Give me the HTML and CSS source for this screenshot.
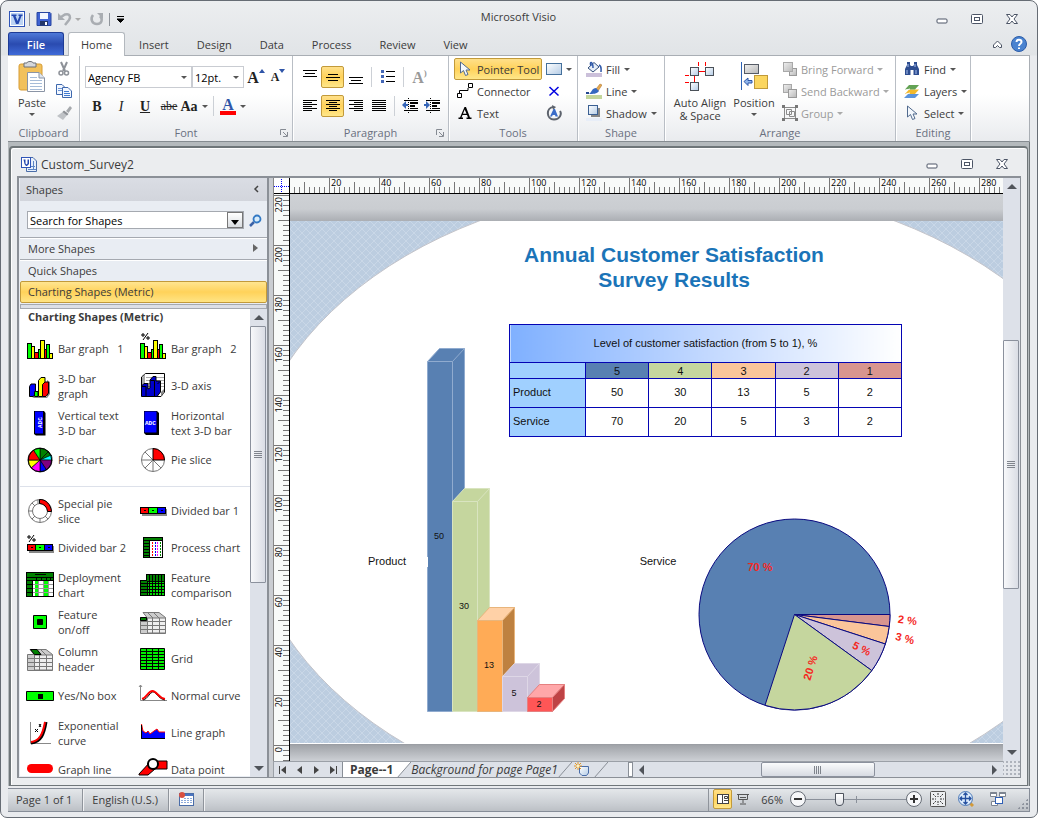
FILE: index.html
```html
<!DOCTYPE html>
<html lang="en">
<head>
<meta charset="utf-8">
<title>Microsoft Visio</title>
<link rel="stylesheet" href="styles.css">
</head>
<body>
<svg class="sprite" aria-hidden="true">
  <defs>
    <linearGradient id="gBox" x1="0" y1="0" x2="1" y2="1"><stop offset="0" stop-color="#fff"/><stop offset="1" stop-color="#b4cce6"/></linearGradient>
    <linearGradient id="gGrey" x1="0" y1="0" x2="1" y2="1"><stop offset="0" stop-color="#f0f0f0"/><stop offset="1" stop-color="#b8b8b8"/></linearGradient>
    <pattern id="hatch" width="8" height="8" patternUnits="userSpaceOnUse"><rect width="8" height="8" fill="#bccde0"/><path d="M0 0L8 8M8 0L0 8" stroke="#c9d7e7" stroke-width="1" fill="none"/></pattern>
    <pattern id="ticksX" x="39" width="50" height="15" patternUnits="userSpaceOnUse"><path d="M.5 0V15M25.5 4V15M5.5 9V15M10.5 9V15M15.5 9V15M20.5 9V15M30.5 9V15M35.5 9V15M40.5 9V15M45.5 9V15" stroke="#777" fill="none"/></pattern>
    <pattern id="ticksY" y="1" width="15" height="50" patternUnits="userSpaceOnUse"><path d="M0 .5H15M4 25.5H15M9 5.5H15M9 10.5H15M9 15.5H15M9 20.5H15M9 30.5H15M9 35.5H15M9 40.5H15M9 45.5H15" stroke="#777" fill="none"/></pattern>
  </defs>
  <symbol id="min" viewBox="0 0 12 10"><rect x="1" y="5" width="10" height="4" rx="1" fill="#fff" stroke="#4c5566"/></symbol>
  <symbol id="max" viewBox="0 0 12 10"><rect x=".5" y=".5" width="11" height="9" rx="1" fill="#fff" stroke="#4c5566"/><rect x="3.5" y="3.5" width="5" height="3" fill="#fff" stroke="#4c5566"/></symbol>
  <symbol id="close" viewBox="0 0 12 10"><path d="M.5 .5H4L6 3L8 .5H11.500L8 5L11.500 9.500H8L6 7L4 9.500H.5L4 5Z" fill="#fff" stroke="#4c5566"/></symbol>
  <symbol id="pointer" viewBox="0 0 12 16"><path d="M1.500 1V12L4.500 9.500L6.500 14.500L9 13.500L7 9H11Z" fill="#f4f8fd" stroke="#516a8e"/></symbol>
  <symbol id="pct" viewBox="0 0 9 7"><path d="M1 1h2v2H1zM6 4h2v2H6zM7 0L2 7" fill="none" stroke="#000"/></symbol>
  <symbol id="bars" viewBox="0 0 26 19"><g stroke="#000" shape-rendering="crispEdges"><path d="M.5 3.500h4v15h-4z" fill="#0f0"/><path d="M4.500 6.500h3v12h-3z" fill="#ff0"/><path d="M7.500 12.500h4v6h-4z" fill="#f00"/><path d="M11.500 9.500h2v9h-2z" fill="#0f0"/><path d="M13.500 .5h4v18h-4z" fill="#ff0"/><path d="M17.500 9.500h2v9h-2z" fill="#f00"/><path d="M19.500 4.500h3v14h-3z" fill="#0f0"/><path d="M22.500 13.500h3v5h-3z" fill="#ff0"/></g></symbol>
  <symbol id="dbar" viewBox="0 0 27 9"><path d="M2 2h25v7H2z" fill="#888"/><g stroke="#000" shape-rendering="crispEdges"><path d="M.5 .5h8v6h-8z" fill="#f00"/><path d="M8.500 .5h9v6h-9z" fill="#0f0"/><path d="M17.500 .5h8v6h-8z" fill="#00f"/><path d="M4 3.500h2M12 3.500h2M21 3.500h2"/></g></symbol>
</svg>

<div class="window">
  <header class="titlebar">
    <div class="qat">
      <svg class="i16" viewBox="0 0 16 16" role="img" aria-label="Visio"><rect x=".5" y=".5" width="15" height="15" fill="#fff" stroke="#2f55b8"/><path d="M2 2H14V14H2Z" fill="#bcd3f3"/><path d="M2.500 3.500H7.500V5H6.500L8.500 10L10.500 5H9.500V3.500H13.500V5H12.500L9.500 13H7L4 5H2.500Z" fill="#2448b0"/></svg>
      <span class="sep"></span>
      <button aria-label="Save"><svg class="i16" viewBox="0 0 16 16"><path d="M1 1.500H14L15 2.500V14.500H1Z" fill="#3f63d3" stroke="#2745a0"/><path d="M4 2H12V8H4Z" fill="#f3f7ff"/><path d="M4 10H12V14.500H4Z" fill="#233668"/><path d="M9 11h2v3H9z" fill="#fff"/></svg></button>
      <button aria-label="Undo" class="undo" disabled><svg class="i16" viewBox="0 0 16 16"><path d="M4 6L8 3.500C13 2 14 6 12 9L8 14" fill="none" stroke="#a9adb2" stroke-width="2.500"/><path d="M1 2V9H8Z" fill="#a9adb2"/></svg><span class="caret pale"></span></button>
      <button aria-label="Redo" disabled><svg class="i16" viewBox="0 0 16 16"><path d="M4 4C1 8 3 13 8 13C13 13 14 8 11 5" fill="none" stroke="#a9adb2" stroke-width="2.500"/><path d="M8 2H14V8Z" fill="#a9adb2"/></svg></button>
      <span class="sep"></span>
      <button aria-label="Customize toolbar"><svg class="i8" viewBox="0 0 8 8"><path d="M1 1.500H8M1 4H8L4.500 7.500Z" stroke="#000" stroke-width="1"/></svg></button>
    </div>
    <h1>Microsoft Visio</h1>
    <div class="winbtns">
      <button aria-label="Minimize"><svg><use href="#min"/></svg></button><button aria-label="Restore"><svg><use href="#max"/></svg></button><button aria-label="Close"><svg><use href="#close"/></svg></button>
    </div>
  </header>

  <nav class="tabs">
    <button class="file">File</button><button class="on">Home</button><button>Insert</button><button>Design</button><button>Data</button><button>Process</button><button>Review</button><button>View</button>
    <span class="grow"></span>
    <button class="ic" aria-label="Minimize ribbon"><svg width="11" height="9" viewBox="0 0 11 9"><path d="M1.500 5L5.500 1L9.500 5V7.500H7.500L5.500 5.500L3.500 7.500H1.500Z" fill="#fff" stroke="#4c5566"/></svg></button>
    <button class="ic" aria-label="Help"><svg class="i16" viewBox="0 0 16 16"><circle cx="8" cy="8" r="7.500" fill="#4a83d0" stroke="#2c5ca8"/><path d="M5.500 6C5.500 3 10.500 3 10.500 6C10.500 8 8 7.500 8 10M8 11.500V13" fill="none" stroke="#fff" stroke-width="2"/></svg></button>
  </nav>

  <section class="ribbon">
    <div class="group g-clip">
      <div class="body">
        <button class="big"><svg width="28" height="32" viewBox="0 0 28 32"><rect x="1" y="3" width="23" height="26" rx="2" fill="#f2c15c" stroke="#d79c35"/><path d="M6 2H9C9 0 15 0 15 2H18V6H6Z" fill="#d6d8dc" stroke="#6d7178"/><path d="M9.500 11.500H21L26.500 17V30.500H9.500Z" fill="#fff" stroke="#8a94a5"/><path d="M21 11.500V17H26.500" fill="#dde6f2" stroke="#8a94a5"/><path d="M12 16.500h7M12 19.500h12M12 22.500h12M12 25.500h12M12 28.500h12" stroke="#a6bcd8"/></svg><span>Paste</span><i class="caret"></i></button>
        <div class="stack">
          <button aria-label="Cut" disabled><svg class="i16" viewBox="0 0 16 16"><path d="M5 1L9 10M11 1L7 10" stroke="#8d9198" stroke-width="2"/><circle cx="5" cy="12" r="2" fill="none" stroke="#8d9198" stroke-width="1.500"/><circle cx="10.500" cy="12" r="2" fill="none" stroke="#8d9198" stroke-width="1.500"/></svg></button>
          <button aria-label="Copy"><svg class="i16" viewBox="0 0 16 16"><path d="M.5 1.500H6L9.500 5V11.500H.5Z" fill="#f2f7ff" stroke="#3e68ad"/><path d="M2 5.500h5M2 7.500h5" stroke="#6d96d6"/><path d="M6.500 4.500H12L15.500 8V14.500H6.500Z" fill="#f2f7ff" stroke="#3e68ad"/><path d="M8 8.500h5M8 10.500h6M8 12.500h6" stroke="#3f7ad0"/></svg></button>
          <button aria-label="Format Painter" disabled><svg class="i16" viewBox="0 0 16 16"><path d="M1 11L8 6L12 9L7 15Z" fill="#bfc2c6"/><path d="M8 5.500L12.500 9L11 10.500L6.500 7Z" fill="#8f9297"/><path d="M10 6L14 1L16 3L12.500 8Z" fill="#a6a9ad"/></svg></button>
        </div>
      </div>
      <h2>Clipboard</h2>
    </div>

    <div class="group g-font">
      <div class="body rows">
        <div class="row">
          <span class="combo c-name"><select aria-label="Font"><option>Agency FB</option></select><i class="caret"></i></span><span class="combo c-size"><select aria-label="Font size"><option>12pt.</option></select><i class="caret"></i></span>
          <button class="t24 serif big1" aria-label="Grow font">A<svg width="6" height="4" viewBox="0 0 6 4"><path d="M0 4L3 0L6 4Z" fill="#2f55a8"/></svg></button>
          <button class="t24 serif big2" aria-label="Shrink font">A<svg width="6" height="4" viewBox="0 0 6 4"><path d="M0 0L3 4L6 0Z" fill="#2f55a8"/></svg></button>
        </div>
        <div class="row">
          <button class="t24 serif"><b>B</b></button><button class="t24 serif"><em>I</em></button><button class="t24 serif"><u>U</u></button><button class="t24 serif"><s>abe</s></button><button class="t24 serif wide">Aa<i class="caret"></i></button>
          <span class="vsep"></span>
          <button class="t24 serif wide fcolor" aria-label="Font colour"><span>A</span><i class="caret"></i></button>
        </div>
      </div>
      <h2>Font<svg class="launch" viewBox="0 0 8 8"><path d="M.5 6V.5H6M3 3L7 7M7.500 3V7.500H3" fill="none" stroke="#868b93"/></svg></h2>
    </div>

    <div class="group g-para">
      <div class="body rows">
        <div class="row">
          <button class="p24" aria-label="Align top"><svg class="i16" viewBox="0 0 16 16"><path d="M1 1.500h14M3 4.500h10M1 7.500h14" stroke="#000"/></svg></button>
          <button class="p24 on" aria-label="Align middle"><svg class="i16" viewBox="0 0 16 16"><path d="M3 5.500h10M1 8.500h14M3 11.500h10" stroke="#000"/></svg></button>
          <button class="p24" aria-label="Align bottom"><svg class="i16" viewBox="0 0 16 16"><path d="M1 8.500h14M3 11.500h10M1 14.500h14" stroke="#000"/></svg></button>
          <span class="vsep"></span>
          <button class="p24" aria-label="Bullets"><svg class="i16" viewBox="0 0 16 16"><path d="M6 2.500h9M6 7.500h9M6 12.500h9" stroke="#000"/><path d="M1 1h3v3H1zM1 6h3v3H1zM1 11h3v3H1z" fill="#4468b8"/></svg></button>
          <span class="vsep"></span>
          <button class="p24 serif pale1" aria-label="Rotate text" disabled>A<sup>)</sup></button>
        </div>
        <div class="row">
          <button class="p24" aria-label="Align left"><svg class="i16" viewBox="0 0 16 16"><path d="M1 2.500h14M1 4.500h9M1 6.500h14M1 8.500h9M1 10.500h14M1 12.500h9" stroke="#000"/></svg></button>
          <button class="p24 on" aria-label="Centre"><svg class="i16" viewBox="0 0 16 16"><path d="M1 2.500h14M4 4.500h8M1 6.500h14M4 8.500h8M1 10.500h14M4 12.500h8" stroke="#000"/></svg></button>
          <button class="p24" aria-label="Align right"><svg class="i16" viewBox="0 0 16 16"><path d="M1 2.500h14M6 4.500h9M1 6.500h14M6 8.500h9M1 10.500h14M6 12.500h9" stroke="#000"/></svg></button>
          <button class="p24" aria-label="Justify"><svg class="i16" viewBox="0 0 16 16"><path d="M1 2.500h14M1 4.500h14M1 6.500h14M1 8.500h14M1 10.500h14M1 12.500h14" stroke="#000"/></svg></button>
          <span class="vsep"></span>
          <button class="p22" aria-label="Decrease indent"><svg class="i16" viewBox="0 0 16 16"><path d="M2 2.500h14M8 10.500h8M2 12.500h14" stroke="#000"/><path d="M8 5h8M8 8h5" stroke="#000" stroke-width="2"/><path d="M6.500 0V15" stroke="#000" stroke-dasharray="1 1"/><path d="M0 7L4 3V6H6V8H4V11Z" fill="#3565b8"/></svg></button>
          <button class="p22" aria-label="Increase indent"><svg class="i16" viewBox="0 0 16 16"><path d="M2 2.500h14M8 10.500h8M2 12.500h14" stroke="#000"/><path d="M8 5h8M8 8h5" stroke="#000" stroke-width="2"/><path d="M6.500 0V15" stroke="#000" stroke-dasharray="1 1"/><path d="M6 7L2 3V6H0V8H2V11Z" fill="#3565b8"/></svg></button>
        </div>
      </div>
      <h2>Paragraph<svg class="launch" viewBox="0 0 8 8"><path d="M.5 6V.5H6M3 3L7 7M7.500 3V7.500H3" fill="none" stroke="#868b93"/></svg></h2>
    </div>

    <div class="group g-tools">
      <div class="body">
        <div class="stack">
          <button class="cmd on"><svg class="i16"><use href="#pointer"/></svg>Pointer Tool</button>
          <button class="cmd"><svg class="i16" viewBox="0 0 16 16"><path d="M2.500 10V7.500H11V5" fill="none" stroke="#000"/><path d="M.5 10.500h4v4h-4zM11.500 .5h4v4h-4z" fill="#fff" stroke="#000"/></svg>Connector</button>
          <button class="cmd"><svg class="i16" viewBox="0 0 16 16"><path d="M7.500 2H9L13 12.500H14.500V14H9.500V12.500H11L10 10H5.500L4.500 12.500H6V14H1.500V12.500H3ZM7.700 4.500L6 8.700H9.500Z" fill="#000"/></svg>Text</button>
        </div>
        <div class="stack">
          <button class="cmd" aria-label="Rectangle"><svg class="i16" viewBox="0 0 16 16"><rect x=".5" y="2.500" width="15" height="11" fill="url(#gBox)" stroke="#44709c"/></svg><i class="caret"></i></button>
          <button class="cmd" aria-label="Connection point"><svg class="i16" viewBox="0 0 16 16"><path d="M3.500 4L12.500 12.500M12.500 4L3.500 12.500" stroke="#0000e0" stroke-width="1.500"/></svg></button>
          <button class="cmd" aria-label="Text block"><svg class="i16" viewBox="0 0 16 16"><path d="M7 2C0 3 0 14 8 14.500C14 14.500 16 9 14 6" fill="none" stroke="#5d636d" stroke-width="2"/><path d="M6 0L10 2L7 5Z" fill="#5d636d"/><path d="M7.500 4H9L12 11.500H9.500L9 10H6.700L6 11.500H4Z" fill="#3a6cc8"/></svg></button>
        </div>
      </div>
      <h2>Tools</h2>
    </div>

    <div class="group g-shape">
      <div class="body"><div class="stack">
        <button class="cmd"><svg class="i16" viewBox="0 0 16 16"><path d="M0 12h16v4H0z" fill="#cbc0da"/><path d="M2 7L8 1.500L13 6L7 11Z" fill="#e6eef8" stroke="#35507c"/><path d="M7 7C7 0 3 0 5 5M13 4C16 5 15 8 15 11" fill="none" stroke="#2d57a8" stroke-width="1.500"/></svg>Fill<i class="caret"></i></button>
        <button class="cmd"><svg class="i16" viewBox="0 0 16 16"><path d="M0 12h16v4H0z" fill="#c3d59b"/><path d="M10 6L14 1L16 2L12 8Z" fill="#e9a94e" stroke="#9c6b26" stroke-width=".5"/><path d="M3 11C6 9 6 5 10 5L13 8C11 11 7 11 3 11Z" fill="#3568c0"/><path d="M0 9h3v2H0z" fill="#23468f"/></svg>Line<i class="caret"></i></button>
        <button class="cmd"><svg class="i16" viewBox="0 0 16 16"><path d="M0 13h16v3H0z" fill="#e8eef8"/><path d="M5 3H14V12H5Z" fill="#868686"/><rect x="2.500" y=".5" width="9" height="9" fill="url(#gBox)" stroke="#3a5f92"/></svg>Shadow<i class="caret"></i></button>
      </div></div>
      <h2>Shape</h2>
    </div>

    <div class="group g-arr">
      <div class="body">
        <button class="big b-auto"><svg width="32" height="32" viewBox="0 0 32 32"><path d="M14.500 1V5M21.500 1V5M15 10.500H21M1 14.500H5M1 21.500H5M10.500 15V21" stroke="#f00" fill="none"/><g fill="url(#gBox)" stroke="#4a5058"><rect x="6.500" y="6.500" width="8" height="8"/><rect x="21.500" y="6.500" width="8" height="8"/><rect x="6.500" y="21.500" width="8" height="8"/></g></svg><span>Auto Align<br>&amp; Space</span></button>
        <button class="big b-pos"><svg width="32" height="32" viewBox="0 0 32 32"><path d="M3.500 1V29" stroke="#2d62b5"/><rect x="6.500" y="3.500" width="14" height="9" fill="url(#gGrey)" stroke="#555b66"/><rect x="16.500" y="14.500" width="13" height="13" fill="#fbd65f" stroke="#c09a3a"/><path d="M6 20.500L10 17V19.500H14V22H10V24.500Z" fill="#8fb4ea" stroke="#2d57a8"/></svg><span>Position</span><i class="caret"></i></button>
        <div class="stack">
          <button class="cmd" disabled><svg class="i16" viewBox="0 0 16 16"><rect x="7.500" y="7.500" width="7" height="7" fill="url(#gGrey)" stroke="#999"/><rect x="1.500" y="1.500" width="9" height="9" fill="url(#gGrey)" stroke="#a9a9a9"/></svg>Bring Forward<i class="caret"></i></button>
          <button class="cmd" disabled><svg class="i16" viewBox="0 0 16 16"><rect x="1.500" y="1.500" width="8" height="8" fill="url(#gGrey)" stroke="#a9a9a9"/><rect x="6.500" y="6.500" width="8" height="8" fill="url(#gGrey)" stroke="#999"/></svg>Send Backward<i class="caret"></i></button>
          <button class="cmd" disabled><svg class="i16" viewBox="0 0 16 16"><path d="M2.500 2.500h11v11h-11zM4.500 4.500h5v5h-5zM7.500 6.500h5v5h-5z" fill="none" stroke="#8b8b8b"/><path d="M0 0h3v3H0zM13 0h3v3h-3zM0 13h3v3H0zM13 13h3v3h-3z" fill="#777"/></svg>Group<i class="caret"></i></button>
        </div>
      </div>
      <h2>Arrange</h2>
    </div>

    <div class="group g-edit">
      <div class="body"><div class="stack">
        <button class="cmd"><svg class="i16" viewBox="0 0 16 16"><path d="M3 1h3v3l1 1h2l1-1V1h3v3l2 4v6H9.500V9h-3v5H1V8l2-4Z" fill="#2e4d90"/><path d="M3 9v4M12 9v4M4 3v3M11 3v3" stroke="#a9c1ee"/></svg>Find<i class="caret"></i></button>
        <button class="cmd"><svg class="i16" viewBox="0 0 16 16"><path d="M4 11H15L11 15H0Z" fill="#5b94dc"/><path d="M5 6.500H15L11 11H1Z" fill="#f2b92c"/><path d="M5 2H15L11 6.500H1Z" fill="#63a254"/><path d="M2 7l4-1M2 11l4-1" stroke="#fff"/></svg>Layers<i class="caret"></i></button>
        <button class="cmd"><svg class="i16"><use href="#pointer"/></svg>Select<i class="caret"></i></button>
      </div></div>
      <h2>Editing</h2>
    </div>
  </section>

  <main class="workspace">
    <div class="doc">
      <header class="doctitle">
        <svg class="i16" viewBox="0 0 16 16"><path d="M5.500 1.500H12L15.500 5V15.500H5.500Z" fill="#e6effb" stroke="#4a6da8"/><path d="M12.500 5v9M7 13.500h8M10 10.500h4" stroke="#5c86c6"/><rect x=".5" y="1.500" width="9" height="10" fill="#fff" stroke="#2f55b8"/><path d="M2.500 3.500h2v4l1 1 1-1v-4h1.500v4.500l-2 2h-1l-1.500-2Z" fill="#2448b0"/></svg>
        <h2>Custom_Survey2</h2>
        <div class="winbtns"><button aria-label="Minimize document"><svg><use href="#min"/></svg></button><button aria-label="Restore document"><svg><use href="#max"/></svg></button><button aria-label="Close document"><svg><use href="#close"/></svg></button></div>
      </header>

      <div class="panes">
        <aside class="side">
          <header><h3>Shapes</h3><button aria-label="Collapse"><svg width="6" height="8" viewBox="0 0 6 8"><path d="M5 1L2 4L5 7" fill="none" stroke="#444" stroke-width="1.500"/></svg></button></header>
          <div class="search">
            <div class="field"><input aria-label="Search for Shapes" value="Search for Shapes"><button aria-label="Search options"><svg width="8" height="5" viewBox="0 0 8 5"><path d="M0 0H8L4 5Z"/></svg></button></div>
            <button aria-label="Search"><svg width="13" height="13" viewBox="0 0 13 13"><path d="M1 12L5 8" stroke="#3b62a8" stroke-width="2.500"/><circle cx="8" cy="5" r="3.500" fill="#d8ecfb" stroke="#3379c4" stroke-width="1.800"/></svg></button>
          </div>
          <button class="stencil more">More Shapes<svg width="5" height="8" viewBox="0 0 5 8"><path d="M0 0L5 4L0 8Z" fill="#666"/></svg></button>
          <button class="stencil quick">Quick Shapes</button>
          <button class="stencil sel">Charting Shapes (Metric)</button>
          <div class="gutter"></div>
          <div class="list">
            <div class="items">
              <h3>Charting Shapes (Metric)</h3>
              <ul>
                <li><svg viewBox="0 0 28 28"><use href="#bars" x="1" y="5" width="26" height="19"/></svg><span>Bar graph &nbsp; 1</span></li>
                <li><svg viewBox="0 0 28 28"><use href="#pct" x="2" y="-2" width="9" height="7"/><use href="#bars" x="1" y="5" width="26" height="19"/></svg><span>Bar graph &nbsp; 2</span></li>
                <li><svg viewBox="0 0 28 28"><path d="M6 25L8 26H21L24 22V10L21 8V25Z" fill="#888"/><g stroke="#000" stroke-width="1"><path d="M3.500 14.500L5 12H9.500V21L7.500 24.500H3.500Z" fill="#00f"/><path d="M8.500 19.500H12V24.500H8.500Z" fill="#0f0"/><path d="M12.500 8.500L15 5.500H19V20L16.500 24.500H12.500Z" fill="#ff0"/><path d="M16.500 12.500L19 10H22.500V21L20 24.500H16.500Z" fill="#f00"/></g></svg><span>3-D bar<br>graph</span></li>
                <li><svg viewBox="0 0 28 28"><path d="M6.500 1.500H25.500V20L22 24.500H3.500L2.500 21V5Z" fill="#fff" stroke="#000"/><path d="M7 5.500h18M7 8.500h18M7 11.500h18M7 14.500h18" stroke="#aaa"/><path d="M3 6L6 2V12L3 15Z" fill="#aaa"/><path d="M22 24V20L25 17V21Z" fill="#888"/><path d="M2.500 14L5 11.500H9V17L11 16V8L14 4.500H17V9H21.500V20L18 24.500H2.500Z" fill="#00c" stroke="#000"/><path d="M3 14.500h4v10M11.500 8.500h4v16M18.500 12l2-2" stroke="#000" fill="none"/></svg><span>3-D axis</span></li>
                <li><svg viewBox="0 0 28 28"><path d="M8 2H18L19.500 4V26.500H10L8 25Z" fill="#000"/><path d="M9 2.500h8v22H9z" fill="#00f"/><text class="mini" transform="translate(16 19) rotate(-90)">ADC</text></svg><span>Vertical text<br>3-D bar</span></li>
                <li><svg viewBox="0 0 28 28"><path d="M5 2H18L20 4V26H7L5 24Z" fill="#000"/><path d="M5.500 2.500h12v21h-12z" fill="#00f"/><text class="mini" x="6" y="16">ADC</text></svg><span>Horizontal<br>text 3-D bar</span></li>
                <li><svg viewBox="0 0 28 28"><g stroke="#000" stroke-width=".7"><path d="M14 14V2A12 12 0 0 1 22.500 5.500Z" fill="#008000"/><path d="M14 14L22.500 5.500A12 12 0 0 1 25.300 10Z" fill="#008000"/><path d="M14 14L25.300 9A12 12 0 0 1 26 14.500Z" fill="#0ff"/><path d="M14 14H26A12 12 0 0 1 20.500 24Z" fill="#800080"/><path d="M14 14L20.500 24A12 12 0 0 1 14 26Z" fill="#00f"/><path d="M14 14V26A12 12 0 0 1 5 22Z" fill="#f0f"/><path d="M14 14L5 22A12 12 0 0 1 2 14Z" fill="#ff0"/><path d="M14 14H2A12 12 0 0 1 7.500 4Z" fill="#f00"/><path d="M14 14L7.500 4A12 12 0 0 1 14 2Z" fill="#0f0"/></g><circle cx="14" cy="14" r="11.700" fill="none" stroke="#000"/></svg><span>Pie chart</span></li>
                <li><svg viewBox="0 0 28 28"><circle cx="14" cy="14" r="11.500" fill="#fff" stroke="#777"/><path d="M14 14H2.500M14 14L6 6M14 14L6 22M14 14V25.500M14 14L22 22" stroke="#777"/><path d="M14 14V2.500A11.500 11.500 0 0 1 25.500 14Z" fill="#f00" stroke="#000"/></svg><span>Pie slice</span></li>
              </ul>
              <ul class="second">
                <li><svg viewBox="0 0 28 28"><circle cx="14" cy="14" r="11.500" fill="#fff" stroke="#777"/><circle cx="14" cy="14" r="7.500" fill="#fff" stroke="#777"/><path d="M2.500 14h4M14 21.500v4M22 14h4M6 6l3 3M6 22l3-3M22 22l-3-3M12 2.500v4" stroke="#777"/><path d="M13.500 2.500C20 2 25 8 25.500 14.500H21.500C21 10 18 7 13.500 6.500Z" fill="#f00" stroke="#000"/></svg><span>Special pie<br>slice</span></li>
                <li><svg viewBox="0 0 28 28"><use href="#dbar" x="1" y="10" width="27" height="9"/></svg><span>Divided bar 1</span></li>
                <li><svg viewBox="0 0 28 28"><use href="#pct" x="1" y="1" width="9" height="7"/><use href="#dbar" x="1" y="10" width="27" height="9"/></svg><span>Divided bar 2</span></li>
                <li><svg viewBox="0 0 28 28"><g stroke="#000" shape-rendering="crispEdges"><path d="M4.500 3.500h19v20h-19z" fill="#fff"/><path d="M4.500 3.500h19v3h-19zM4.500 6.500h6v17h-6zM4.500 9.500h6M4.500 12.500h6M4.500 15.500h6M4.500 18.500h6M4.500 21.500h6" fill="#008000"/></g><path d="M13.500 8v15" stroke="#f00" stroke-dasharray="2 1"/><path d="M16.500 8v15" stroke="#00f" stroke-dasharray="2 1"/><path d="M18.500 8v15" stroke="#f0f" stroke-dasharray="2 1"/><path d="M21.500 8v15" stroke="#080" stroke-dasharray="2 1"/></svg><span>Process chart</span></li>
                <li><svg viewBox="0 0 28 28"><g stroke="#000" shape-rendering="crispEdges"><path d="M.5 1.500h27v24H.5z" fill="#fff"/><path d="M.5 1.500h27v8H.5zM.5 9.500h6v16h-6zM.5 6.500h27M.5 13.500h6M.5 17.500h6M.5 21.500h6M10.500 6v3M15.500 6v3M20.500 6v3M24.500 6v3M9 3.500h11" fill="#008000"/><path d="M8.500 10v15h4V10zM17.500 10v15h5V10z" fill="#0f0" stroke="none"/></g><path d="M7 13.500h20M7 17.500h20M7 21.500h20M12.500 10v15M17.500 10v15M22.500 10v15" stroke="#999"/></svg><span>Deployment<br>chart</span></li>
                <li><svg viewBox="0 0 28 28"><g stroke="#000" shape-rendering="crispEdges"><path d="M7.500 3.500h18v21h-24V9.500h6z" fill="#008000"/><path d="M8 10h17v14H8z" fill="#0d0" stroke="none"/><path d="M8 10h17v14H8zM10.500 3.500v21M13.500 3.500v21M16.500 3.500v21M19.500 3.500v21M22.500 3.500v21M2 12.500h24M2 15.500h24M2 18.500h24M2 21.500h24" fill="none"/></g></svg><span>Feature<br>comparison</span></li>
                <li><svg viewBox="0 0 28 28"><path d="M7.500 7.500h13v13h-13z" fill="#0f0" stroke="#000"/><path d="M11.500 11.500h5v5h-5z" stroke="#000" fill="#000"/></svg><span>Feature<br>on/off</span></li>
                <li><svg viewBox="0 0 28 28"><g stroke="#777" fill="#ccc"><path d="M4 4.500H20L26.500 9.500V25.500H1.500V9.500H8Z"/><path d="M8.500 10h18v15h-18z" fill="#eee"/><path d="M13.500 10v15M20.500 10v15M2 13.500h25M2 17.500h25M2 21.500h25M9 5l5 5M15 5l5 5"/></g><path d="M1.500 9.500h6v3h-6z" fill="#008000" stroke="#000"/></svg><span>Row header</span></li>
                <li><svg viewBox="0 0 28 28"><g stroke="#777" fill="#ccc"><path d="M4 4.500H20L26.500 9.500V25.500H1.500V9.500H8Z"/><path d="M8.500 10h18v15h-18z" fill="#eee"/><path d="M13.500 10v15M20.500 10v15M2 13.500h25M2 17.500h25M2 21.500h25M9 5l5 5M15 5l5 5"/></g><path d="M4.500 4.500H11L15 9.500H8.500Z" fill="#008000" stroke="#000"/></svg><span>Column<br>header</span></li>
                <li><svg viewBox="0 0 28 28"><path d="M1.500 3.500h24v21h-24z" fill="#0e0" stroke="#000"/><path d="M7.500 3v21M13.500 3v21M19.500 3v21M1 6.500h25M1 9.500h25M1 12.500h25M1 15.500h25M1 18.500h25M1 21.500h25" stroke="#000"/></svg><span>Grid</span></li>
                <li><svg viewBox="0 0 28 28"><path d="M.5 9.500h27v9H.5z" fill="#0f0" stroke="#000"/><path d="M12 12h5v5h-5z"/></svg><span>Yes/No box</span></li>
                <li><svg viewBox="0 0 28 28"><path d="M1.500 3v15.500H28M0 5l1.500-2L3 5" stroke="#888" fill="none"/><path d="M4 18C9 17 10 11 13.500 10S19 17 26 18" fill="none" stroke="#000"/><path d="M3 17C8 16 9 9 13.500 9S19 16 26 17" fill="none" stroke="#f00" stroke-width="2"/></svg><span>Normal curve</span></li>
                <li><svg viewBox="0 0 28 28"><path d="M4.500 3v21.500H25" fill="none" stroke="#888"/><path d="M5 24C15 23 18 15 20 3" fill="none" stroke="#000" stroke-width="3"/><path d="M5 23C14 22 17 14 19 3" fill="none" stroke="#f00" stroke-width="2"/><path d="M9 10l3 3M12 10l-3 3M13 5l2 3M15 5l-2 3" stroke="#000"/></svg><span>Exponential<br>curve</span></li>
                <li><svg viewBox="0 0 28 28"><path d="M2 5L4 12L7 14L9 12L11 15L15 12L18 10L20 13H26V20H2Z" fill="#00f"/><path d="M2.500 5L4 12L7 14L9 12L11 15L15 12L18 10L20 13H26" fill="none" stroke="#f00"/><path d="M2.500 6V19.500H26" fill="none" stroke="#000"/></svg><span>Line graph</span></li>
                <li><svg viewBox="0 0 28 28"><rect x="1" y="8" width="26" height="9" rx="4.500" fill="#f00"/></svg><span>Graph line</span></li>
                <li><svg viewBox="0 0 28 28"><path d="M0 18L12 5H28V13H16L9 19H0Z" fill="#f00" stroke="#000"/><circle cx="14" cy="8" r="5" fill="#fff" stroke="#000" stroke-width="2"/></svg><span>Data point</span></li>
              </ul>
            </div>
            <div class="vscroll"><button aria-label="Scroll up"><i class="up"></i></button><div class="thumb t1"></div><span class="grow"></span><button aria-label="Scroll down"><i class="down"></i></button></div>
          </div>
        </aside>
        <div class="splitter"></div>

        <section class="editor">
          <svg class="corner" viewBox="0 0 17 16"><path d="M0 0h17v16H0z" fill="#fff"/><path d="M8.500 1v14M1 8.500h15" stroke="#00f" stroke-dasharray="1 1"/><path d="M16.500 0v16M0 15.500h17" stroke="#000"/><path d="M.5 0v16" stroke="#888"/></svg>
          <svg class="rulerx"><rect width="100%" height="15" fill="url(#ticksX)"/><g><text x="41" y="8">20</text><text x="91" y="8">40</text><text x="141" y="8">60</text><text x="191" y="8">80</text><text x="241" y="8">100</text><text x="291" y="8">120</text><text x="341" y="8">140</text><text x="391" y="8">160</text><text x="441" y="8">180</text><text x="491" y="8">200</text><text x="541" y="8">220</text><text x="591" y="8">240</text><text x="641" y="8">260</text><text x="691" y="8">280</text></g></svg>
          <svg class="rulery"><rect width="15" height="100%" fill="url(#ticksY)"/><g text-anchor="end"><text transform="translate(8 3) rotate(-90)">220</text><text transform="translate(8 53) rotate(-90)">200</text><text transform="translate(8 103) rotate(-90)">180</text><text transform="translate(8 153) rotate(-90)">160</text><text transform="translate(8 203) rotate(-90)">140</text><text transform="translate(8 253) rotate(-90)">120</text><text transform="translate(8 303) rotate(-90)">100</text><text transform="translate(8 353) rotate(-90)">80</text><text transform="translate(8 403) rotate(-90)">60</text><text transform="translate(8 453) rotate(-90)">40</text><text transform="translate(8 503) rotate(-90)">20</text><text transform="translate(8 553) rotate(-90)">0</text></g></svg>

          <div class="canvas">
            <div class="page">
              <svg class="drawing" role="img" aria-label="Product bar chart and service pie chart">
                <rect width="100%" height="100%" fill="url(#hatch)"/>
                <ellipse cx="397" cy="279" rx="443" ry="316" fill="#fff" stroke="#c4c4ca"/>
                <g stroke-width="1" transform="translate(-.5 -.5)">
                  <g fill="#5880b2" stroke="#90abcf"><path d="M138 141L150 128H175V478L163 491H138Z"/><path d="M138 141H163V491M163 141L175 128" fill="none"/></g>
                  <g fill="#c5d69e" stroke="#d9e4c0"><path d="M163 281L175 268H200V478L188 491H163Z"/><path d="M163 281H188V491M188 281L200 268" fill="none"/></g>
                  <g stroke="#e8b57c"><path d="M188 400L200 387H225L213 400Z" fill="#ffd1a7"/><path d="M213 400L225 387V478L213 491Z" fill="#be8140"/><path d="M188 400H213V491H188Z" fill="#ffab56"/></g>
                  <g fill="#cdc3da" stroke="#ded7e6"><path d="M213 456L225 443H250V478L238 491H213Z"/><path d="M213 456H238V491M238 456L250 443" fill="none"/></g>
                  <g stroke="#e58080"><path d="M238 477L250 464H275L263 477Z" fill="#ffa7a9"/><path d="M263 477L275 464V478L263 491Z" fill="#be4345"/><path d="M238 477H263V491H238Z" fill="#ff5656"/></g>
                </g>
                <path d="M136 336h2v10h-2z" fill="#fff"/>
                <g class="lbl s9"><text x="149" y="318">50</text><text x="174" y="388">30</text><text x="199" y="447">13</text><text x="224" y="475">5</text><text x="249" y="486">2</text></g>
                <g class="lbl s11"><text x="97" y="344">Product</text><text x="368" y="344">Service</text></g>
                <g stroke="#0a0a80" stroke-linejoin="round">
                  <circle cx="504.500" cy="393.500" r="95.500" fill="#5880b2"/>
                  <path d="M504.500 393.500H600A95.500 95.500 0 0 1 599.200 405.500Z" fill="#d8958f"/>
                  <path d="M504.500 393.500L599.200 405.500A95.500 95.500 0 0 1 595.300 423Z" fill="#fac59a"/>
                  <path d="M504.500 393.500L595.300 423A95.500 95.500 0 0 1 581.800 449.600Z" fill="#cdc3da"/>
                  <path d="M504.500 393.500L581.800 449.600A95.500 95.500 0 0 1 475 484.300Z" fill="#c5d69e"/>
                </g>
                <g class="pct"><text transform="translate(470 350)">70 %</text><text transform="translate(617 403) rotate(7)">2 %</text><text transform="translate(614 421) rotate(14)">3 %</text><text transform="translate(570 431) rotate(27)">5 %</text><text transform="translate(524 448) rotate(-72)">20 %</text></g>
              </svg>
              <h2 class="heading">Annual Customer Satisfaction<br>Survey Results</h2>
              <table class="survey">
                <colgroup><col class="first"><col span="5"></colgroup>
                <thead>
                  <tr class="cap"><th colspan="6">Level of customer satisfaction (from 5 to 1), %</th></tr>
                  <tr class="lv"><th class="c0"></th><th class="c5">5</th><th class="c4">4</th><th class="c3">3</th><th class="c2">2</th><th class="c1">1</th></tr>
                </thead>
                <tbody>
                  <tr><th class="c0">Product</th><td>50</td><td>30</td><td>13</td><td>5</td><td>2</td></tr>
                  <tr><th class="c0">Service</th><td>70</td><td>20</td><td>5</td><td>3</td><td>2</td></tr>
                </tbody>
              </table>
            </div>
          </div>

          <div class="vscroll main"><button aria-label="Scroll page up"><i class="up"></i></button><span class="pre"></span><div class="thumb t2"></div><span class="grow"></span><button aria-label="Scroll page down"><i class="down"></i></button></div>

          <div class="sheets">
            <div class="sheetnav">
              <button aria-label="First page"><svg viewBox="0 0 9 10"><path d="M1.500 1v8" stroke="#444"/><path d="M8 1v8L3 5z" fill="#444"/></svg></button><button aria-label="Previous page"><svg viewBox="0 0 9 10"><path d="M7 1v8L2 5z" fill="#444"/></svg></button><button aria-label="Next page"><svg viewBox="0 0 9 10"><path d="M2 1v8l5-4z" fill="#444"/></svg></button><button aria-label="Last page"><svg viewBox="0 0 9 10"><path d="M7.500 1v8" stroke="#444"/><path d="M1 1v8l5-4z" fill="#444"/></svg></button>
            </div>
            <button class="sheet active">Page--1</button>
            <svg class="slant" viewBox="0 0 14 16"><path d="M0 0H14L0 16Z" fill="#fff"/><path d="M14 0L0 16" stroke="#888e96"/></svg>
            <button class="sheet back">Background for page Page1</button>
            <svg class="slant" viewBox="0 0 14 16"><path d="M14 0L0 16" stroke="#888e96"/></svg>
            <button class="ins" aria-label="Insert page"><svg class="i16" viewBox="0 0 16 16"><path d="M5.500 4.500H14.500V11L12.500 13.500H8L5.500 11Z" fill="url(#gBox)" stroke="#4a6da8"/><path d="M4 0v8M0 4h8M1 1l6 6M7 1L1 7" stroke="#e0962a"/><circle cx="4" cy="4" r="1.500" fill="#fff3c0"/></svg></button>
            <svg class="slant" viewBox="0 0 14 16"><path d="M14 0L0 16" stroke="#888e96"/></svg>
            <span class="tabend"></span><span class="grip"></span>
            <div class="hscroll"><button aria-label="Scroll left"><i class="lf"></i></button><span class="grow"></span><div class="thumb"></div><span class="post"></span><button aria-label="Scroll right"><i class="rt"></i></button></div>
          </div>
          <div class="sizer"></div>
        </section>
      </div>
    </div>
  </main>

  <footer class="status">
    <span class="cell">Page 1 of 1</span><span class="cell c-lang">English (U.S.)</span>
    <span class="cell c-mac"><svg class="i16" viewBox="0 0 16 16"><rect x="1.500" y="2.500" width="14" height="12" fill="#fff" stroke="#4a6da8"/><path d="M2 3h13v2H2z" fill="#4a74c0"/><path d="M6 7.500h8M6 9.500h8M3 11.500h11M3 9.500h2" stroke="#8cabdc" stroke-dasharray="2 1"/><circle cx="4" cy="4" r="3" fill="#d85040"/></svg></span>
    <span class="grow"></span>
    <div class="view">
      <button class="on" aria-label="Normal view"><svg width="14" height="12" viewBox="0 0 14 12"><rect x="1.500" y="1.500" width="11" height="9" fill="#fff" stroke="#444"/><path d="M6.500 1v10M8 7.500h4" stroke="#444"/><path d="M8.500 3.500h3v2h-3z" fill="none" stroke="#444"/></svg></button>
      <button aria-label="Full screen"><svg width="12" height="12" viewBox="0 0 12 12"><path d="M0 1.500h12M1.500 2V6.500h9V2M6 7v3M3 11h6M3 4.500h6" fill="none" stroke="#555"/></svg></button>
      <span class="zoomval">66%</span>
      <button aria-label="Zoom out"><svg class="i16" viewBox="0 0 16 16"><circle cx="8" cy="8" r="7.500" fill="#f6f7f9" stroke="#666c75"/><path d="M4 8h8" stroke="#333" stroke-width="2"/></svg></button>
      <input type="range" aria-label="Zoom" min="0" max="100" value="32">
      <button aria-label="Zoom in"><svg class="i16" viewBox="0 0 16 16"><circle cx="8" cy="8" r="7.500" fill="#f6f7f9" stroke="#666c75"/><path d="M4 8h8M8 4v8" stroke="#333" stroke-width="2"/></svg></button>
      <button class="gap" aria-label="Fit page"><svg class="i16" viewBox="0 0 16 16"><rect x=".5" y=".5" width="15" height="15" rx="1" fill="#eceef0" stroke="#555"/><path d="M8 2v4M8 10v4M2 8h4M10 8h4M3 3l3 3M13 3l-3 3M3 13l3-3M13 13l-3-3" stroke="#333" stroke-dasharray="2 1"/></svg></button>
      <button class="gap" aria-label="Pan and zoom"><svg class="i16" viewBox="0 0 16 16"><path d="M11 11l4 4" stroke="#d29a3a" stroke-width="3"/><circle cx="7.500" cy="7.500" r="7" fill="#dcebfb" stroke="#4d7ab8"/><path d="M7.500 2v11M2 7.500h11M5.500 4l2-2 2 2M5.500 11l2 2 2-2M4 5.500l-2 2 2 2M11 5.500l2 2-2 2" fill="none" stroke="#2550a0" stroke-width="1.300"/></svg></button>
      <button class="gap" aria-label="Switch windows"><svg class="i16" viewBox="0 0 16 16"><path d="M.5 1.500h6v4h-6zM9.500 1.500h6v4h-6zM1.500 10.500h6v4h-6z" fill="#fff" stroke="#7c8490"/><path d="M.5 2h6M9.500 2h6" stroke="#7c8490" stroke-width="2"/><rect x="5.500" y="6.500" width="7" height="6" fill="#fff" stroke="#2f5fb5"/></svg></button>
      <span class="dots"></span>
    </div>
  </footer>
</div>
</body>
</html>
```
FILE: styles.css
```css
* { box-sizing: border-box; }
body { margin: 0; font: 11px/15px "Open Sans", "Noto Sans", sans-serif; color: #3b3b3b; background: #fff; }
button, input, select { font: inherit; color: inherit; margin: 0; padding: 0; border: 0; background: none; }
button { display: inline-flex; align-items: center; justify-content: center; white-space: nowrap; }
h1, h2, h3, ul { margin: 0; padding: 0; font-size: inherit; font-weight: 400; }
svg { display: block; flex: none; }
.sprite { position: absolute; width: 0; height: 0; }
.i16 { width: 16px; height: 16px; }
.i8 { width: 8px; height: 8px; }
.grow { flex: 1; }
.caret { flex: none; width: 0; height: 0; border: 3px solid transparent; border-top-color: #555; border-bottom: 0; }
.caret.pale, button:disabled .caret { border-top-color: #aaa; }

.window { min-height: 100vh; display: flex; flex-direction: column; padding: 0 7px 5px; border: 1px solid #666c74; border-radius: 8px 8px 7px 7px; background: linear-gradient(#eceef0, #e1e4e7 54px, #e9ebee 55px); }
.titlebar { display: grid; grid-template-columns: 1fr auto 1fr; align-items: center; height: 31px; padding-right: 1px; }
.qat { display: flex; align-items: center; padding: 5px 0 0 1px; }
.qat .sep { width: 1px; height: 13px; margin: 0 6px 0 4px; background: #8f949b; }
.qat .undo { gap: 2px; margin: 0 8px 0 5px; }
.winbtns { display: flex; justify-content: flex-end; gap: 23px; }
.winbtns svg { width: 12px; height: 10px; }
.titlebar .winbtns { padding: 4px 11px 0 0; }

.tabs { display: flex; height: 23px; }
.tabs button { padding: 0 13px; border: 1px solid transparent; border-bottom: 0; }
.tabs .file { width: 56px; padding: 0; margin-right: 4px; color: #fff; font-weight: 600; border-color: #1d3b96; border-radius: 3px 3px 0 0; background: linear-gradient(#4e79d8, #2a4bb0 50%, #3f6ad8); }
.tabs .on { margin-bottom: -1px; padding: 0 12px; border-color: #b3b8be; border-radius: 3px 3px 0 0; background: #fff; z-index: 1; }
.tabs .ic { padding: 0 2px 0 4px; }

.ribbon { display: flex; height: 87px; border: 1px solid #a9aeb4; border-bottom-color: #868c91; border-left: 0; background: linear-gradient(#fff 45%, #e9ebee); }
.group { display: flex; flex-direction: column; flex: none; border-right: 1px solid #b9bec5; box-shadow: 1px 0 #fff; }
.group .body { display: flex; height: 68px; padding-top: 2px; }
.group h2 { position: relative; text-align: center; color: #6a7080; line-height: 17px; }
.launch { position: absolute; right: 4px; bottom: 4px; width: 8px; height: 8px; }
.g-clip { width: 72px; } .g-font { width: 213px; } .g-para { width: 156px; } .g-tools { width: 129px; }
.g-shape { width: 87px; } .g-arr { width: 231px; } .g-edit { width: 75px; }
.big { flex-direction: column; justify-content: flex-start; line-height: 13px; padding-top: 3px; }
.big svg { margin-bottom: 3px; }
.big .caret { margin-top: 4px; }
.g-clip .big { width: 48px; }
.b-auto { width: 70px; } .b-pos { width: 38px; margin-right: 8px; }
.stack { display: flex; flex-direction: column; align-items: flex-start; }
.stack button { height: 22px; }
.cmd { gap: 4px; padding: 0 2px; border: 1px solid transparent; border-radius: 2px; }
.cmd:disabled { color: #9a9a9a; }
.on.cmd, .p24.on, .view .on { border: 1px solid #c29a3a; border-radius: 2px; background: linear-gradient(#ffe08a, #ffd25a 50%, #ffe78a); }
.g-tools .body { padding-left: 5px; gap: 1px; }
.g-shape .body, .g-edit .body { padding-left: 5px; }
.g-arr .cmd { padding-left: 0; gap: 3px; }
.rows { flex-direction: column; gap: 7px; }
.group .rows { padding: 10px 0 0 5px; }
.row { display: flex; align-items: center; height: 22px; }
.row > * { flex: none; }
.combo { display: grid; grid-template-columns: 1fr 10px; align-items: center; height: 22px; border: 1px solid #c9ccd2; background: #fff; color: #000; }
.combo select { grid-area: 1 / 1 / 2 / 3; appearance: none; width: 100%; padding-left: 2px; }
.combo .caret { grid-area: 1 / 2; }
.c-name { width: 107px; } .c-size { width: 52px; }
.t24 { width: 24px; height: 22px; }
.t24.wide { width: 26px; gap: 4px; }
.serif { font-family: "Liberation Serif", serif; font-weight: 700; font-size: 14px; color: #222; }
.serif em, .serif s { font-weight: 400; }
.serif s { font-size: 12px; }
.big1 { font-size: 16px; } .big2 { width: 20px; font-size: 12px; }
.big1 svg, .big2 svg { align-self: flex-start; margin-top: 3px; }
.vsep { width: 1px; height: 20px; margin: 0 4px; background: #ccd0d6; }
.g-font .vsep { margin: 0 6px; }
.fcolor { color: #2f55a8; }
.fcolor span { width: 16px; border-bottom: 4px solid #f00; line-height: 13px; font-size: 16px; }
.p24 { width: 23px; height: 22px; } .p22 { width: 22px; height: 22px; }
.pale1 { color: #999; font-size: 16px; } .pale1 sup { font-size: 9px; align-self: flex-start; }

.workspace { flex: 1; display: flex; padding: 4px 1px 0; background: #b5babd; border-right: 1px solid #6f7679; }
.doc { flex: 1; min-width: 0; display: flex; flex-direction: column; padding: 0 6px 7px; border: 2px solid #6f7679; border-right-width: 1px; border-bottom-width: 1px; border-radius: 4px 4px 0 0; background: #ebedef; box-shadow: inset 1px 1px #fff; }
.doctitle { display: flex; align-items: center; gap: 4px; height: 28px; padding: 4px 13px 0 4px; font-size: 12px; }
.doctitle .winbtns { flex: 1; }
.panes { flex: 1; display: flex; border: 2px solid #8b9097; border-right-width: 1px; border-bottom-width: 1px; min-height: 0; }

.side { width: 250px; flex: none; display: flex; flex-direction: column; border-right: 2px solid #8b9097; background: #e9edf3; padding-left: 1px; }
.side > header { display: flex; align-items: center; justify-content: space-between; height: 23px; padding: 0 8px 1px 6px; background: linear-gradient(#dadde4, #d2d5dc); }
.search { display: flex; align-items: center; gap: 5px; height: 36px; padding: 2px 5px 0 7px; }
.field { display: flex; flex: 1; height: 18px; border: 1px solid #a5a9b0; background: #fff; }
.field input { flex: 1; min-width: 0; padding-left: 2px; color: #000; outline: 0; }
.field button { width: 16px; border: 1px solid #777; background: linear-gradient(#fff, #d9dce0); }
.field svg { margin-top: 4px; }
.stencil { justify-content: space-between; height: 22px; padding: 0 9px 1px 8px; border-top: 1px solid #a5a9b0; box-shadow: inset 0 1px #fff; text-align: left; }
.stencil.sel { border: 1px solid #c29a3a; border-radius: 2px; padding-left: 7px; box-shadow: none; background: linear-gradient(#ffe590, #ffd25a 50%, #ffe484); }
.gutter { height: 5px; margin: 1px 0 0; border: 1px solid #a5a9b0; background: #dcdfe6; }
.list { flex: 1 1 0; min-height: 0; display: flex; overflow: hidden; }
.items { flex: 1; height: 467px; overflow: hidden; background: #fff; }
.items h3 { padding-left: 8px; font-weight: 700; line-height: 16px; height: 21px; }
.items ul { display: grid; grid-template-columns: 113px 1fr; grid-auto-rows: 37px; list-style: none; padding-left: 6px; }
.items .second { margin-top: 8px; padding-top: 5px; border-top: 1px solid #dde1ea; }
.items li { display: flex; align-items: center; gap: 4px; white-space: nowrap; }
.items li svg { width: 28px; height: 28px; overflow: visible; }
.mini { font: 700 6px "Liberation Mono", monospace; fill: #fff; }

.vscroll { width: 17px; display: flex; flex-direction: column; background: #dde1e9; }
.vscroll button, .hscroll button { width: 17px; height: 17px; flex: none; }
.up, .down, .lf, .rt { width: 0; height: 0; border: 5px solid transparent; }
.up { border-bottom-color: #50545a; border-top: 0; }
.down { border-top-color: #50545a; border-bottom: 0; }
.lf { border-right-color: #50545a; border-left: 0; }
.rt { border-left-color: #50545a; border-right: 0; }
.thumb { flex: none; display: flex; align-items: center; justify-content: center; border: 1px solid #8b919d; border-radius: 1px; background: linear-gradient(90deg, #f7f8fa, #dadde5); }
.thumb::before { content: ""; width: 8px; height: 8px; background: repeating-linear-gradient(#666b74 0 1px, transparent 1px 2px); opacity: .8; }
.t1 { height: 257px; width: 16px; } .t2 { height: 249px; width: 16px; }
.vscroll .pre { height: 145px; }

.splitter { width: 4px; background: #cacdd2; }
.editor { flex: 1; min-width: 0; display: grid; grid-template-columns: 17px 1fr 17px; grid-template-rows: 16px 1fr 16px; }
.corner { width: 17px; height: 16px; }
.rulerx, .rulery { overflow: visible; }
.rulerx { width: 100%; height: 16px; background: #f8faf9; border-bottom: 1px solid #000; }
.rulery { width: 17px; height: 100%; background: #f8faf9; border-left: 1px solid #888; border-right: 1px solid #000; grid-area: 2 / 1; }
.rulerx text, .rulery text { font-size: 9px; fill: #000; }
.canvas { grid-area: 2 / 2; position: relative; overflow: hidden; display: flex; flex-direction: column; padding: 27px 0 16px; background: linear-gradient(#ced1d5, #cacdd1 15px, #abaeb3 27px, #fff 28px, #fff calc(100% - 17px), #a0a3a8 calc(100% - 16px), #cdd0d5); }
.page { flex: 1; position: relative; overflow: hidden; background: #fff; border-bottom: 1px solid #9b9ea4; }
.drawing { position: absolute; inset: 0; width: 100%; height: calc(100% - 1px); }
.lbl { font-family: "Liberation Sans", Arial, sans-serif; fill: #111; text-anchor: middle; }
.s9 { font-size: 9px; } .s11 { font-size: 11px; }
.pct { font: 700 11px "Liberation Sans Narrow", "Liberation Sans", sans-serif; fill: #f5281e; text-anchor: middle; }
.heading { position: absolute; left: 233px; top: 21px; width: 302px; text-align: center; white-space: nowrap; font: 700 21px/25px "Liberation Sans", Arial, sans-serif; color: #1b74b8; }
.survey { position: absolute; left: 219px; top: 103px; width: 393px; table-layout: fixed; border-collapse: collapse; font: 11px/13px "Liberation Sans", Arial, sans-serif; color: #111; background: #fff; text-align: center; }
.survey .first { width: 76px; }
.survey th, .survey td { padding: 0; font-weight: 400; border: 1px solid #0404b4; height: 29px; }
.survey td, .survey th.c0 { padding-bottom: 2px; }
.survey .cap th { height: 38px; background: linear-gradient(90deg, #7fb0ff, #c2d8ff 50%, #fff); }
.survey .lv th { height: 16px; line-height: 14px; padding: 0; }
.survey th.c0 { padding-left: 3px; text-align: left; background: #a0d0ff; }
.survey .c5 { background: #5880b2; } .survey .c4 { background: #c5d69e; } .survey .c3 { background: #fac59a; } .survey .c2 { background: #cdc3da; } .survey .c1 { background: #d8958f; }
.vscroll.main { grid-area: 1 / 3 / 3 / 4; position: relative; }
.sheets { grid-area: 3 / 1 / 4 / 3; display: flex; background: #dde1e8; border-top: 1px solid #9ba0a7; border-left: 1px solid #9ba0a7; min-width: 0; overflow: hidden; }
.sheetnav { display: flex; width: 68px; }
.sheetnav button { width: 17px; }
.sheetnav svg { width: 9px; height: 10px; }
.sheet { height: 15px; font-size: 12px; line-height: 15px; }
.sheet.active { padding: 0 4px 0 7px; font-weight: 700; background: #fff; border-left: 1px solid #888e96; }
.sheet.back { font-style: italic; }
.slant { width: 14px; height: 16px; }
.ins { width: 20px; margin-right: 2px; }
.tabend { width: 20px; }
.grip { width: 5px; background: #fff; border: 1px solid #888e96; }
.hscroll { flex: 1; display: flex; background: #dde1e8; }
.hscroll button { height: 15px; }
.hscroll .thumb { width: 114px; border-radius: 2px; background: linear-gradient(#fafbfc, #d7dbe2); }
.hscroll .thumb::before { background: repeating-linear-gradient(90deg, #666b74 0 1px, transparent 1px 2px); }
.hscroll .post { width: 111px; }
.sizer { grid-area: 3 / 3; background: radial-gradient(#aeb3bc 1px, transparent 1px) 2px 3px / 4px 4px #e2e5ea; }

.status { display: flex; height: 24px; margin-top: 2px; border: 1px solid #868d98; border-left: 0; background: linear-gradient(#e4e7ea, #c9cdd2 70%, #bcc0c5); }
.cell { display: flex; align-items: center; padding: 0 10px 2px 8px; border-right: 1px solid #8f949b; box-shadow: 1px 0 #f0f1f3; }
.c-lang { padding-left: 9px; } .c-mac { padding: 0 9px 2px; }
.view { display: flex; align-items: center; border-left: 1px solid #8f949b; padding: 0 0 2px 4px; }
.view .on { width: 19px; height: 20px; }
.view .on + button { width: 21px; }
.zoomval { margin: 0 7px 0 8px; }
.view .gap { margin-left: 8px; }
.view .gap + .gap { margin-left: 12px; }
.view .gap:last-of-type { margin-left: 16px; }
.view input { appearance: none; width: 100px; height: 14px; background: linear-gradient(#8a909a, #8a909a) center / 100% 1px no-repeat, linear-gradient(#8a909a, #8a909a) 50% 50% / 1px 7px no-repeat; }
.view input::-webkit-slider-thumb { appearance: none; width: 9px; height: 13px; background: linear-gradient(#fff, #dfe2e7); border: 1px solid #4e545e; border-radius: 1px 1px 5px 5px; }
.dots { width: 12px; height: 12px; margin: 9px 0 0 11px; background: radial-gradient(#8b919b 1px, transparent 1px) 0 0 / 4px 4px; clip-path: polygon(100% 0, 100% 100%, 0 100%); }
```
